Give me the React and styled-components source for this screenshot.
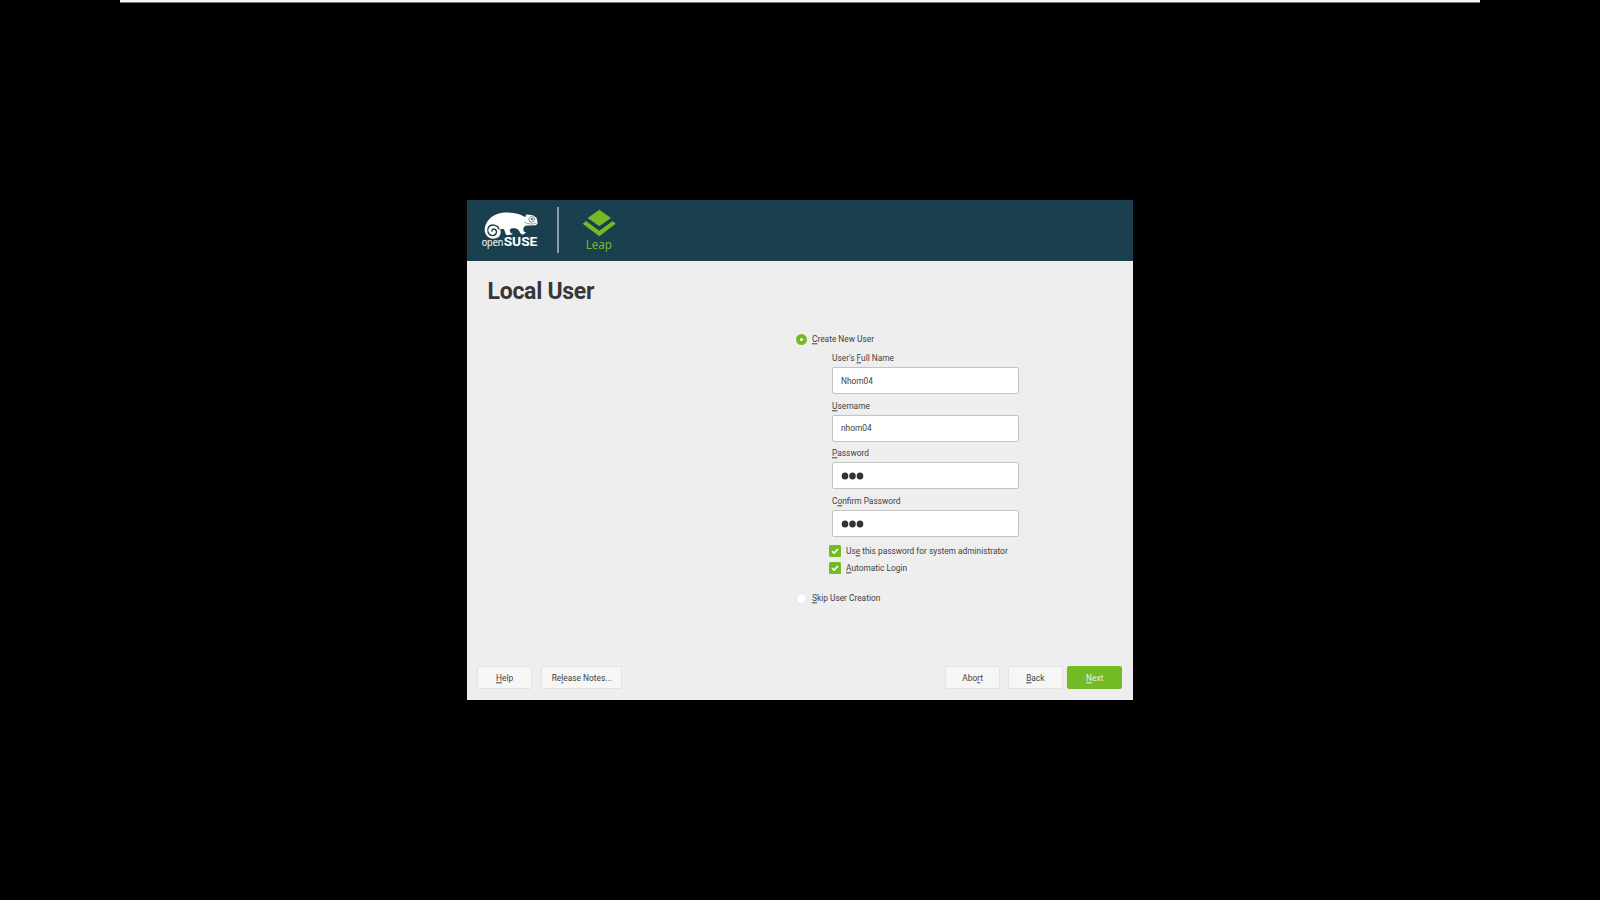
import React from "react";
import styled, { createGlobalStyle } from "styled-components";

const GlobalStyle = createGlobalStyle`
  body { margin: 0; background: #000; overflow: hidden; }
  *, *::before, *::after { box-sizing: border-box; }
`;

const Screen = styled.div`
  width: 1600px;
  height: 900px;
  background: #000;
  display: flex;
  flex-direction: column;
  align-items: center;
  font-family: Roboto, "Liberation Sans", sans-serif;
  font-size: 9px;
  color: #414141;
`;

const TopStrip = styled.div`
  width: 1360px;
  height: 3px;
  background: #f4f6f9;
  border-bottom: 1px solid #77777b;
`;

const Window = styled.main`
  width: 666px;
  height: 500px;
  margin-top: 197px;
  background: #eeeeee;
  display: flex;
  flex-direction: column;
`;

const Header = styled.header`
  height: 61px;
  flex: none;
  background: #1a3f4f;
  display: flex;
  align-items: flex-start;
  padding: 4px 0 0 7px;
`;

const Divider = styled.div`
  width: 2px;
  height: 46px;
  margin: 3px 0 0 11px;
  background: #8c9fa7;
`;

const LeapBox = styled.div`
  margin-left: 16px;
`;

const Title = styled.h1`
  margin: 16px 0 0 20.5px;
  height: 28px;
  line-height: 29px;
  font-size: 23px;
  font-weight: 700;
  letter-spacing: -0.27px;
  color: #373737;
  white-space: nowrap;
  transform: translateY(-0.4px);
`;

const Form = styled.form`
  margin: 27px 0 0 329px;
  width: 224px;
  display: flex;
  flex-direction: column;
`;

const Option = styled.label`
  display: flex;
  align-items: center;
  gap: 5px;
  height: 14px;
  margin-top: ${(p) => p.$top || 0}px;
`;

const Radio = styled.span`
  width: 11px;
  height: 11px;
  border-radius: 50%;
  border: ${(p) => (p.$on ? "4px solid #73ba25" : "1px solid #e1e3ea")};
  background: #fff;
`;

const Fields = styled.div`
  margin: 5px 0 0 36.3px;
  display: flex;
  flex-direction: column;
`;

const Field = styled.div`
  height: 47.5px;
`;

const Text = styled.span`
  display: block;
  line-height: 15px;
  height: 14px;
  font-size: 9.4px;
  white-space: nowrap;
  transform: translateY(-0.7px) scaleX(0.89);
  transform-origin: ${(p) => (p.$center ? "center" : "left")};
`;

const Key = styled.span`
  text-decoration: underline;
  text-decoration-thickness: 1px;
  text-underline-offset: 1px;
  text-decoration-skip-ink: none;
`;

const Input = styled.div`
  margin-top: 2px;
  width: 187px;
  height: 27px;
  border: 1px solid #c3c3c3;
  border-radius: 2px;
  background: #fff;
  display: flex;
  align-items: center;
  padding-left: 8px;
`;

const Dots = styled.svg`
  width: 23px;
  height: 8px;
  margin-top: 1px;
  fill: #333;
`;

const Checks = styled.div`
  margin: 1.5px 0 0 32.7px;
`;

const Check = styled.label`
  display: flex;
  align-items: center;
  gap: 5px;
  height: 17px;
`;

const Box = styled.span`
  width: 12px;
  height: 12px;
  border-radius: 1.5px;
  background: #73ba25;
  display: flex;
`;

const Footer = styled.footer`
  margin-top: auto;
  padding: 0 11px 11px 10.4px;
  display: flex;
`;

const Button = styled.button`
  width: ${(p) => p.$w}px;
  height: 23px;
  margin: 0 0 0 ${(p) => p.$left || 0};
  padding: 0;
  display: flex;
  align-items: center;
  justify-content: center;
  font: inherit;
  border-radius: 2px;
  border: 1px solid ${(p) => (p.$primary ? "#73ba25" : "#e2e2e2")};
  background: ${(p) => (p.$primary ? "#73ba25" : "#f6f6f6")};
  color: ${(p) => (p.$primary ? "#e9f5dc" : "#414141")};
`;

const OpenSuseLogo = () => (
  <svg width="72" height="50" viewBox="0 0 216 150">
    <path
      fill="#fff"
      d="M32 79C32 57 46 38 72 29C88 24 113 24 133 30C143 33 149 38 154 39L156 35C153 32 157 31 162 32C174 31 184 37 188 42L191 57C190 63 184 65 177 64C168 66 159 62 153 66C148 70 146 76 150 83L157 85C151 86 153 92 148 91C144 94 142 89 139 88C136 79 131 74 122 73C115 72 109 73 107 78L110 87L117 89C111 93 105 92 101 94L96 92L91 78C88 73 83 77 78 75C83 86 79 99 66 103C48 108 33 97 32 79Z"
    />
    <path
      fill="none"
      stroke="#1a3f4f"
      strokeWidth="4"
      strokeLinecap="round"
      d="M75 75C69 61 51 60 44 69C37 79 43 94 56 95C68 94 71 81 63 76C58 73 52 77 54 82"
    />
    <circle cx="173" cy="46" r="8.5" fill="none" stroke="#1a3f4f" strokeWidth="1.8" />
    <ellipse cx="174" cy="45" rx="4" ry="2.6" fill="#1a3f4f" />
    <path d="M151 54C160 61 174 61 187 58" fill="none" stroke="#1a3f4f" strokeWidth="1.4" />
    <text x="23" y="126" fontFamily="Open Sans, sans-serif" fontSize="31" fill="#eef2f3" stroke="#eef2f3" strokeWidth="0.5" textLength="65" lengthAdjust="spacingAndGlyphs">
      open
    </text>
    <text x="89" y="126" fontFamily="Roboto, sans-serif" fontWeight="700" fontSize="36" fill="#fff" textLength="101" lengthAdjust="spacingAndGlyphs">
      SUSE
    </text>
    <circle cx="192" cy="124" r="1.3" fill="#a9b8be" />
  </svg>
);

const LeapLogo = () => (
  <svg width="50" height="50" viewBox="0 0 150 150" fill="#73ba25">
    <path d="M73 17L108 42L73 67L38 42Z" />
    <path d="M33 51L73 80L113 51L122 59L73 97L23 59Z" />
    <text x="32" y="136" fontFamily="Noto Sans, sans-serif" fontSize="36" textLength="79" lengthAdjust="spacingAndGlyphs">
      Leap
    </text>
  </svg>
);

const CheckBox = () => (
  <Box>
    <svg width="12" height="12" viewBox="0 0 12 12">
      <path d="M3 6.1L5.1 8.1L9 4" fill="none" stroke="#fff" strokeWidth="1.6" />
    </svg>
  </Box>
);

/* Wraps the accelerator letter of a label, marked by a preceding "&". */
const Mnemonic = ({ text, center }) => {
  const i = text.indexOf("&");
  return (
    <Text $center={center}>
      {text.slice(0, i)}
      <Key>{text[i + 1]}</Key>
      {text.slice(i + 2)}
    </Text>
  );
};

const Password = () => (
  <Dots viewBox="0 0 23 8">
    <ellipse cx="4" cy="4" rx="3.3" ry="3.6" />
    <ellipse cx="11.5" cy="4" rx="3.3" ry="3.6" />
    <ellipse cx="19" cy="4" rx="3.3" ry="3.6" />
  </Dots>
);

export default function App() {
  return (
    <>
      <GlobalStyle />
      <Screen>
        <TopStrip />
        <Window>
          <Header>
            <OpenSuseLogo />
            <Divider />
            <LeapBox>
              <LeapLogo />
            </LeapBox>
          </Header>
          <Title>Local User</Title>
          <Form>
            <Option>
              <Radio $on />
              <Mnemonic text="&Create New User" />
            </Option>
            <Fields>
              <Field>
                <Mnemonic text="User's &Full Name" />
                <Input><Text>Nhom04</Text></Input>
              </Field>
              <Field>
                <Mnemonic text="&Username" />
                <Input><Text>nhom04</Text></Input>
              </Field>
              <Field>
                <Mnemonic text="&Password" />
                <Input><Password /></Input>
              </Field>
              <Field>
                <Mnemonic text="C&onfirm Password" />
                <Input><Password /></Input>
              </Field>
            </Fields>
            <Checks>
              <Check>
                <CheckBox />
                <Mnemonic text="Us&e this password for system administrator" />
              </Check>
              <Check>
                <CheckBox />
                <Mnemonic text="&Automatic Login" />
              </Check>
            </Checks>
            <Option $top={14.5}>
              <Radio />
              <Mnemonic text="&Skip User Creation" />
            </Option>
          </Form>
          <Footer>
            <Button type="button" $w={55}><Mnemonic center text="&Help" /></Button>
            <Button type="button" $w={81} $left="8.5px"><Mnemonic center text="Re&lease Notes..." /></Button>
            <Button type="button" $w={55} $left="auto"><Mnemonic center text="Abo&rt" /></Button>
            <Button type="button" $w={55} $left="8px"><Mnemonic center text="&Back" /></Button>
            <Button type="button" $w={55} $left="4px" $primary><Mnemonic center text="&Next" /></Button>
          </Footer>
        </Window>
      </Screen>
    </>
  );
}
